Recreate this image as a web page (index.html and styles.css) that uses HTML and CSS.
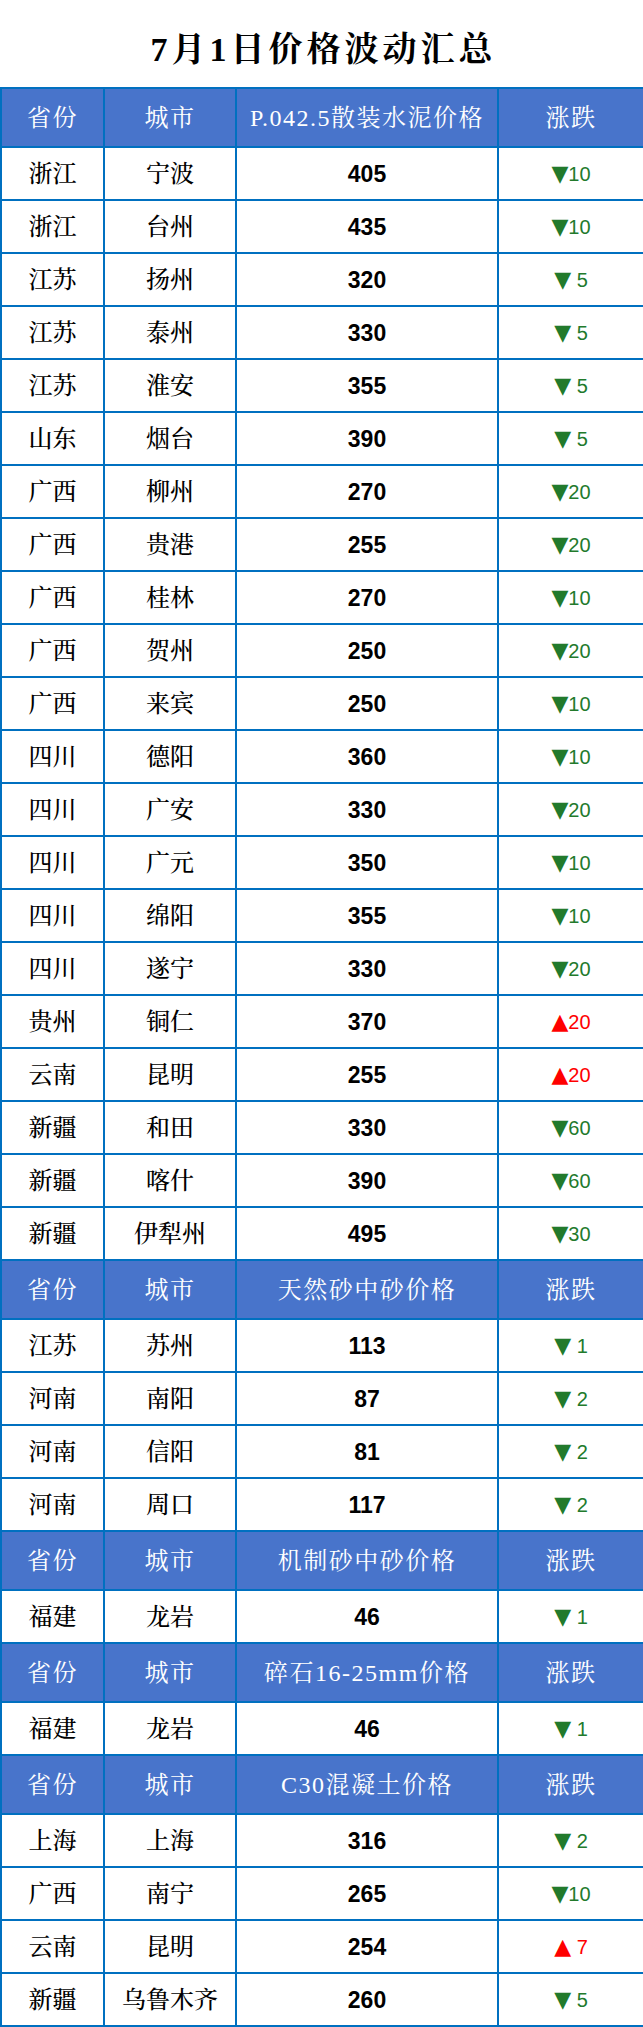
FILE: index.html
```html
<!DOCTYPE html>
<html lang="zh">
<head>
<meta charset="utf-8">
<title>7月1日价格波动汇总</title>
<link rel="stylesheet" href="styles.css">
</head>
<body>
<div class="title">7月1日价格波动汇总</div>
<table class="prices">
  <colgroup>
    <col class="c1"><col class="c2"><col class="c3"><col class="c4">
  </colgroup>
  <tbody>
    <tr class="head"><td>省份</td><td>城市</td><td>P.042.5散装水泥价格</td><td>涨跌</td></tr>
    <tr><td>浙江</td><td>宁波</td><td class="num">405</td><td class="chg down"><span class="tri">▼</span>10</td></tr>
    <tr><td>浙江</td><td>台州</td><td class="num">435</td><td class="chg down"><span class="tri">▼</span>10</td></tr>
    <tr><td>江苏</td><td>扬州</td><td class="num">320</td><td class="chg down"><span class="tri">▼</span> 5</td></tr>
    <tr><td>江苏</td><td>泰州</td><td class="num">330</td><td class="chg down"><span class="tri">▼</span> 5</td></tr>
    <tr><td>江苏</td><td>淮安</td><td class="num">355</td><td class="chg down"><span class="tri">▼</span> 5</td></tr>
    <tr><td>山东</td><td>烟台</td><td class="num">390</td><td class="chg down"><span class="tri">▼</span> 5</td></tr>
    <tr><td>广西</td><td>柳州</td><td class="num">270</td><td class="chg down"><span class="tri">▼</span>20</td></tr>
    <tr><td>广西</td><td>贵港</td><td class="num">255</td><td class="chg down"><span class="tri">▼</span>20</td></tr>
    <tr><td>广西</td><td>桂林</td><td class="num">270</td><td class="chg down"><span class="tri">▼</span>10</td></tr>
    <tr><td>广西</td><td>贺州</td><td class="num">250</td><td class="chg down"><span class="tri">▼</span>20</td></tr>
    <tr><td>广西</td><td>来宾</td><td class="num">250</td><td class="chg down"><span class="tri">▼</span>10</td></tr>
    <tr><td>四川</td><td>德阳</td><td class="num">360</td><td class="chg down"><span class="tri">▼</span>10</td></tr>
    <tr><td>四川</td><td>广安</td><td class="num">330</td><td class="chg down"><span class="tri">▼</span>20</td></tr>
    <tr><td>四川</td><td>广元</td><td class="num">350</td><td class="chg down"><span class="tri">▼</span>10</td></tr>
    <tr><td>四川</td><td>绵阳</td><td class="num">355</td><td class="chg down"><span class="tri">▼</span>10</td></tr>
    <tr><td>四川</td><td>遂宁</td><td class="num">330</td><td class="chg down"><span class="tri">▼</span>20</td></tr>
    <tr><td>贵州</td><td>铜仁</td><td class="num">370</td><td class="chg up"><span class="tri">▲</span>20</td></tr>
    <tr><td>云南</td><td>昆明</td><td class="num">255</td><td class="chg up"><span class="tri">▲</span>20</td></tr>
    <tr><td>新疆</td><td>和田</td><td class="num">330</td><td class="chg down"><span class="tri">▼</span>60</td></tr>
    <tr><td>新疆</td><td>喀什</td><td class="num">390</td><td class="chg down"><span class="tri">▼</span>60</td></tr>
    <tr><td>新疆</td><td>伊犁州</td><td class="num">495</td><td class="chg down"><span class="tri">▼</span>30</td></tr>

    <tr class="head"><td>省份</td><td>城市</td><td>天然砂中砂价格</td><td>涨跌</td></tr>
    <tr><td>江苏</td><td>苏州</td><td class="num">113</td><td class="chg down"><span class="tri">▼</span> 1</td></tr>
    <tr><td>河南</td><td>南阳</td><td class="num">87</td><td class="chg down"><span class="tri">▼</span> 2</td></tr>
    <tr><td>河南</td><td>信阳</td><td class="num">81</td><td class="chg down"><span class="tri">▼</span> 2</td></tr>
    <tr><td>河南</td><td>周口</td><td class="num">117</td><td class="chg down"><span class="tri">▼</span> 2</td></tr>

    <tr class="head"><td>省份</td><td>城市</td><td>机制砂中砂价格</td><td>涨跌</td></tr>
    <tr><td>福建</td><td>龙岩</td><td class="num">46</td><td class="chg down"><span class="tri">▼</span> 1</td></tr>

    <tr class="head"><td>省份</td><td>城市</td><td>碎石16-25mm价格</td><td>涨跌</td></tr>
    <tr><td>福建</td><td>龙岩</td><td class="num">46</td><td class="chg down"><span class="tri">▼</span> 1</td></tr>

    <tr class="head"><td>省份</td><td>城市</td><td>C30混凝土价格</td><td>涨跌</td></tr>
    <tr><td>上海</td><td>上海</td><td class="num">316</td><td class="chg down"><span class="tri">▼</span> 2</td></tr>
    <tr><td>广西</td><td>南宁</td><td class="num">265</td><td class="chg down"><span class="tri">▼</span>10</td></tr>
    <tr><td>云南</td><td>昆明</td><td class="num">254</td><td class="chg up"><span class="tri">▲</span> 7</td></tr>
    <tr><td>新疆</td><td>乌鲁木齐</td><td class="num">260</td><td class="chg down"><span class="tri">▼</span> 5</td></tr>
  </tbody>
</table>
</body>
</html>
```
FILE: styles.css
```css
html, body {
  margin: 0;
  padding: 0;
  background: #ffffff;
}

body {
  width: 643px;
  font-family: "Liberation Serif", "Noto Serif CJK SC", "Noto Sans CJK SC", serif;
  color: #000000;
}

.title {
  height: 87px;
  display: flex;
  align-items: center;
  justify-content: center;
  padding-top: 6px;
  box-sizing: border-box;
  font-size: 34px;
  letter-spacing: 4px;
  font-weight: 700;
  text-indent: 4px;
}

.prices {
  width: 643px;
  border-collapse: collapse;
  table-layout: fixed;
  border: 2px solid #0070c0;
}

.c1 { width: 103px; }
.c2 { width: 132px; }
.c3 { width: 262px; }
.c4 { width: 146px; }

.prices td {
  border: 2px solid #0070c0;
  padding: 0;
  text-align: center;
  vertical-align: middle;
  font-size: 24px;
  line-height: 28px;
  white-space: nowrap;
  font-weight: 500;
}

.prices tr {
  height: 53px;
}

.prices tr.head {
  height: 59px;
}

.prices tr.head td {
  background: #4874cb;
  color: #ffffff;
  font-weight: 400;
  letter-spacing: 1.5px;
}

.prices td.num {
  font-family: "Liberation Sans", Arial, sans-serif;
  font-weight: 700;
  font-size: 23px;
}

.prices td.chg {
  font-family: "Liberation Sans", Arial, sans-serif;
  font-size: 20px;
  font-weight: 400;
  white-space: pre;
}

.chg.down { color: #227a2c; }
.chg.up { color: #ff0000; }

.tri {
  font-family: "DejaVu Sans", sans-serif;
  font-size: 22px;
}
```
